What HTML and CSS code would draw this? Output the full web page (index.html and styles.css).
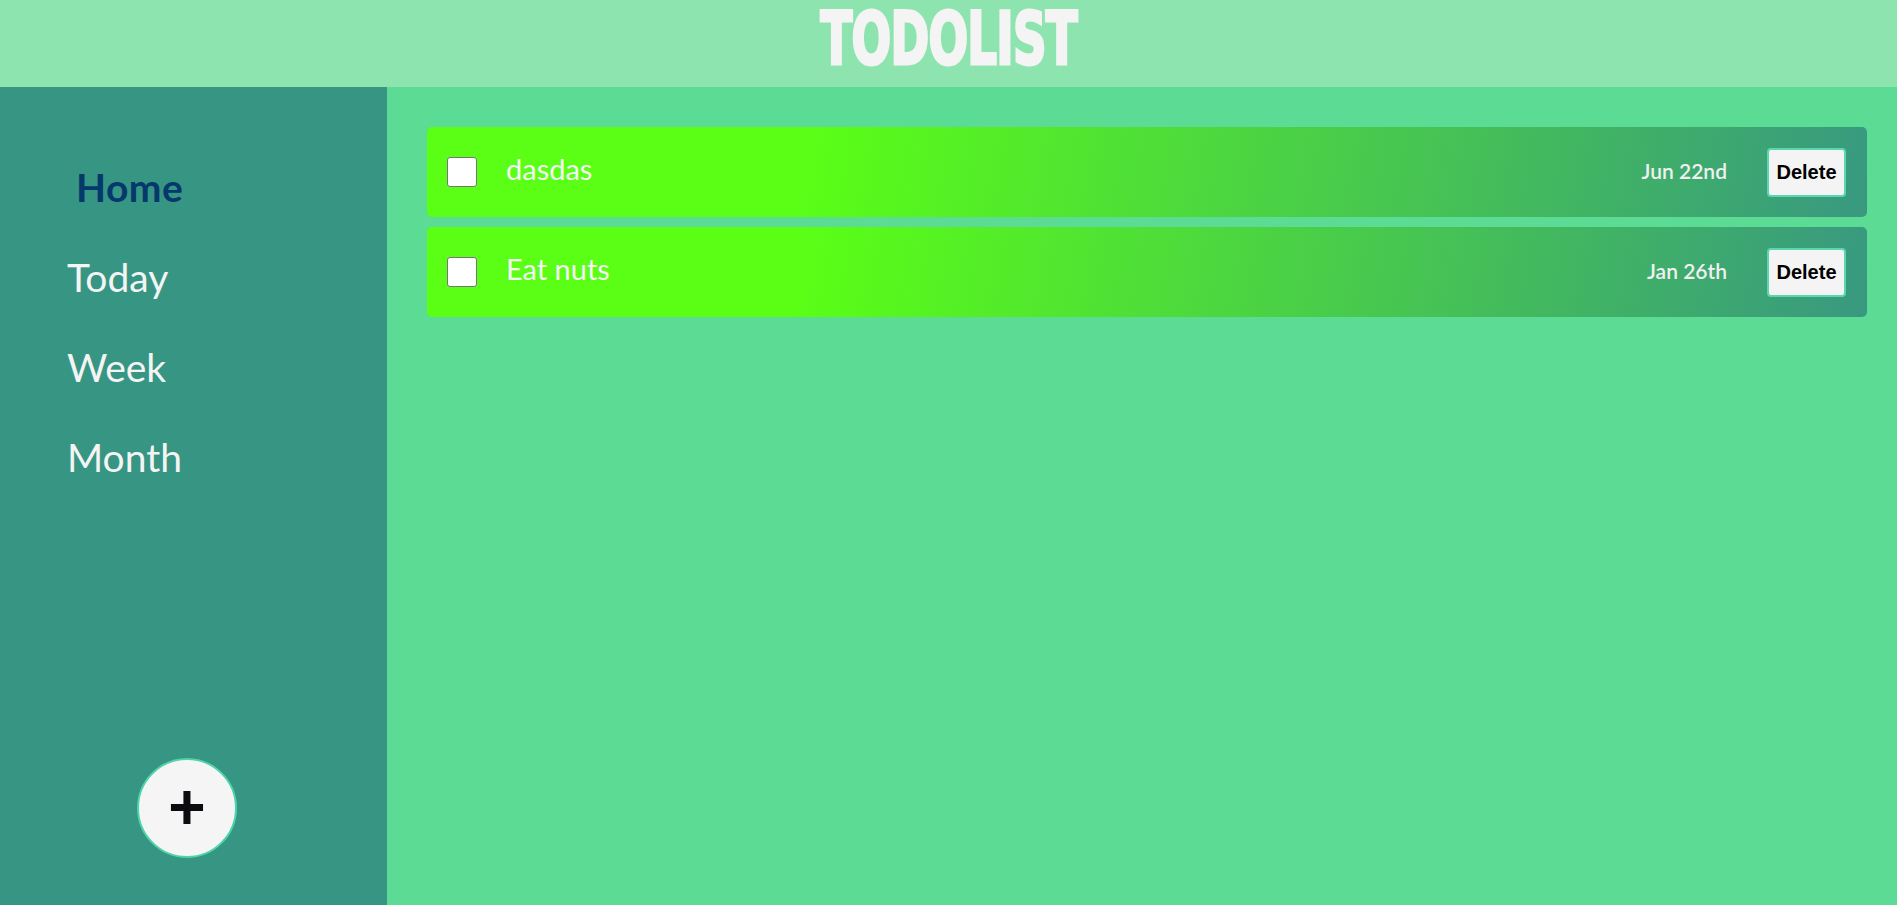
FILE: index.html
```html
<!DOCTYPE html>
<html lang="en">
<head>
<meta charset="utf-8">
<title>Todolist</title>
<link rel="stylesheet" href="styles.css">
</head>
<body>
<header class="header">
  <h1 class="title">TODOLIST</h1>
</header>
<div class="layout">
  <aside class="sidebar">
    <nav class="nav">
      <a class="nav-item active">Home</a>
      <a class="nav-item">Today</a>
      <a class="nav-item">Week</a>
      <a class="nav-item">Month</a>
    </nav>
    <button class="add-btn">+</button>
  </aside>
  <main class="main">
    <div class="todo">
      <input type="checkbox" class="check">
      <span class="todo-title">dasdas</span>
      <span class="todo-date">Jun 22nd</span>
      <button class="delete-btn">Delete</button>
    </div>
    <div class="todo">
      <input type="checkbox" class="check">
      <span class="todo-title">Eat nuts</span>
      <span class="todo-date">Jan 26th</span>
      <button class="delete-btn">Delete</button>
    </div>
  </main>
</div>
</body>
</html>
```
FILE: styles.css
```css
* { box-sizing: border-box; }
html, body { margin: 0; padding: 0; height: 100%; }
body {
  display: flex;
  flex-direction: column;
  font-family: Lato, "Noto Sans", sans-serif;
  background: #5cdb95;
  overflow: hidden;
}
.header {
  height: 87px;
  flex: 0 0 87px;
  background: #8ee4af;
  display: flex;
  justify-content: center;
  align-items: flex-start;
}
.title {
  margin: 0;
  font-family: "DejaVu Sans Condensed", "DejaVu Sans", sans-serif;
  font-stretch: condensed;
  font-weight: bold;
  font-size: 73px;
  line-height: 78px;
  color: #f4f4f4;
  -webkit-text-stroke: 3px #f4f4f4;
  letter-spacing: -1px;
  transform: scaleX(0.71);
  transform-origin: center top;
}
.layout {
  flex: 1;
  display: flex;
  min-height: 0;
}
.sidebar {
  width: 387px;
  flex: 0 0 387px;
  background: #379683;
  display: flex;
  flex-direction: column;
}
.nav {
  display: flex;
  flex-direction: column;
  padding-top: 55px;
}
.nav-item {
  display: block;
  font-size: 39px;
  line-height: 90px;
  height: 90px;
  padding-left: 67px;
  color: #f4f4f4;
  cursor: pointer;
}
.nav-item.active {
  color: #05386b;
  font-weight: bold;
  padding-left: 76px;
  letter-spacing: 0.5px;
}
.add-btn {
  margin-top: auto;
  margin-bottom: 47px;
  margin-left: 137px;
  width: 100px;
  height: 100px;
  border-radius: 50%;
  border: 2px solid #4fd4a9;
  background: #f5f5f5;
  color: #0b0b10;
  font-family: "Liberation Sans", Arial, sans-serif;
  font-weight: bold;
  font-size: 64px;
  line-height: 1;
  display: flex;
  align-items: center;
  justify-content: center;
  padding: 0 0 2px 0;
  cursor: pointer;
}
.main {
  flex: 1;
  padding: 40px 30px 0 40px;
  display: flex;
  flex-direction: column;
  gap: 10px;
}
.todo {
  height: 90px;
  border-radius: 5px;
  background: linear-gradient(100deg, #5aff15 26%, #379683 102%);
  display: flex;
  align-items: center;
  padding: 0 21px 0 20px;
}
.check {
  appearance: none;
  -webkit-appearance: none;
  margin: 0;
  width: 30px;
  height: 30px;
  flex: 0 0 30px;
  background: #fff;
  border: 1px solid #767676;
  border-radius: 3px;
}
.todo-title {
  flex: 1;
  margin-left: 29px;
  margin-bottom: 7px;
  font-size: 29px;
  color: #f4f4f4;
}
.todo-date {
  font-size: 21px;
  font-weight: 600;
  color: #f0f0f0;
  margin-right: 40px;
  margin-bottom: 4px;
}
.delete-btn {
  width: 79px;
  height: 49px;
  border: 2px solid #5cd6b0;
  border-radius: 4px;
  background: #f4f4f4;
  color: #000;
  font-family: "Liberation Sans", Arial, sans-serif;
  font-weight: bold;
  font-size: 20px;
  padding: 0;
  cursor: pointer;
}
```
